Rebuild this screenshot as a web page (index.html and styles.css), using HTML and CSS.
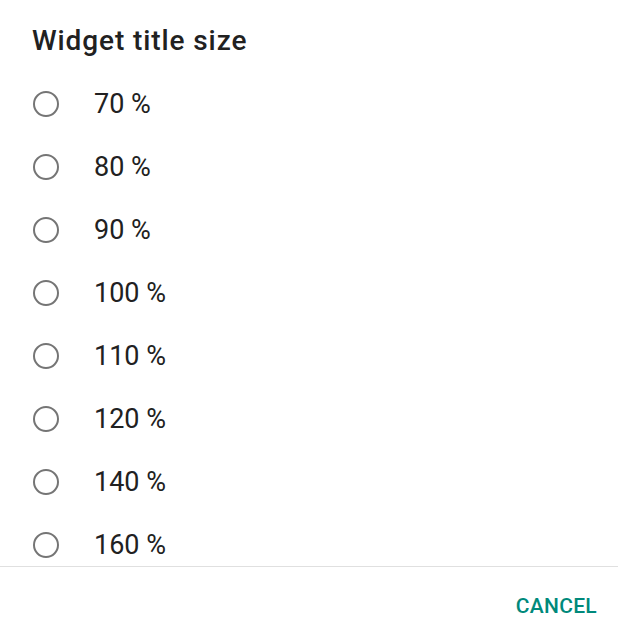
FILE: index.html
```html
<!DOCTYPE html>
<html>
<head>
<meta charset="utf-8">
<link rel="stylesheet" href="styles.css">
</head>
<body>
<div class="dialog">
  <h1 class="title">Widget title size</h1>
  <div class="list">
    <div class="row"><span class="radio"></span><span class="label">70 %</span></div>
    <div class="row"><span class="radio"></span><span class="label">80 %</span></div>
    <div class="row"><span class="radio"></span><span class="label">90 %</span></div>
    <div class="row"><span class="radio"></span><span class="label">100 %</span></div>
    <div class="row"><span class="radio"></span><span class="label">110 %</span></div>
    <div class="row"><span class="radio"></span><span class="label">120 %</span></div>
    <div class="row"><span class="radio"></span><span class="label">140 %</span></div>
    <div class="row"><span class="radio"></span><span class="label">160 %</span></div>
  </div>
  <div class="footer">
    <span class="button">CANCEL</span>
  </div>
</div>
</body>
</html>
```
FILE: styles.css
```css
html, body {
  margin: 0;
  padding: 0;
  background: #ffffff;
}
.dialog {
  width: 618px;
  height: 638px;
  display: flex;
  flex-direction: column;
  font-family: Roboto, "Liberation Sans", sans-serif;
  color: #212121;
}
.title {
  margin: 0;
  padding: 25px 32px 0;
  height: 47px;
  font-size: 28px;
  line-height: 32px;
  font-weight: 500;
  letter-spacing: 0.9px;
  color: #212121;
}
.list {
  height: 494px;
  overflow: hidden;
  display: flex;
  flex-direction: column;
}
.row {
  flex: 0 0 63px;
  height: 63px;
  display: flex;
  align-items: center;
  padding-left: 33px;
}
.radio {
  box-sizing: border-box;
  width: 26px;
  height: 26px;
  border: 2.5px solid #757575;
  border-radius: 50%;
  flex: 0 0 26px;
}
.label {
  margin-left: 35px;
  font-size: 27px;
  color: #212121;
}
.footer {
  border-top: 1px solid #e0e0e0;
  flex: 1;
  display: flex;
  justify-content: flex-end;
  padding: 27px 21px 0 0;
}
.button {
  font-size: 21px;
  line-height: 24px;
  font-weight: 500;
  letter-spacing: 0.3px;
  color: #00897b;
  height: 24px;
}
```
